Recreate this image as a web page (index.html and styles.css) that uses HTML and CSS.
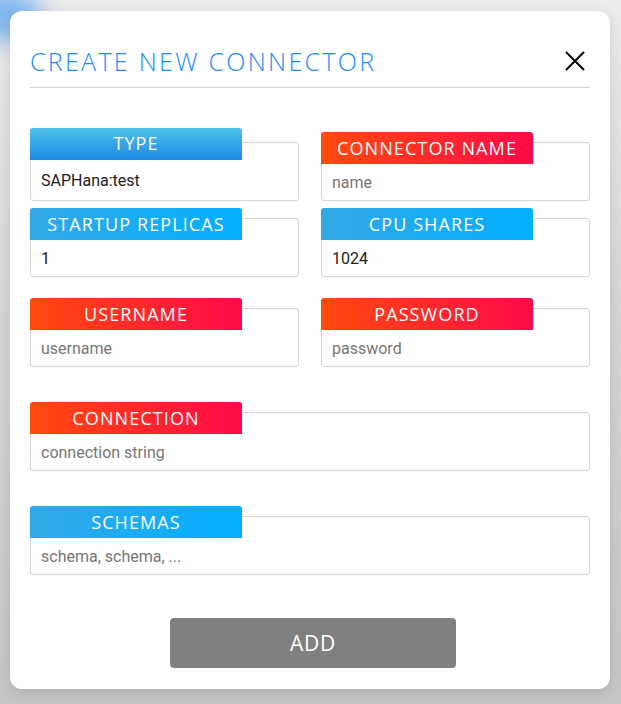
FILE: index.html
```html
<!DOCTYPE html>
<html>
<head>
<meta charset="utf-8">
<link rel="stylesheet" href="styles.css">
</head>
<body>
<div class="backdrop-blob"></div>
<div class="modal">
  <div class="modal-header">
    <h1 class="modal-title">CREATE NEW CONNECTOR</h1>
    <svg class="close-icon" width="20" height="20" viewBox="0 0 20 20"><path d="M1 1 L19 19 M19 1 L1 19" stroke="#000" stroke-width="2" fill="none"/></svg>
  </div>
  <div class="form">
    <div class="row row-1">
      <div class="field field-select">
        <div class="badge badge-select">TYPE</div>
        <div class="box"><span class="value">SAPHana:test</span></div>
      </div>
      <div class="field">
        <div class="badge badge-red">CONNECTOR NAME</div>
        <div class="box"><span class="placeholder">name</span></div>
      </div>
    </div>
    <div class="row row-2">
      <div class="field">
        <div class="badge badge-blue">STARTUP REPLICAS</div>
        <div class="box"><span class="value">1</span></div>
      </div>
      <div class="field">
        <div class="badge badge-blue">CPU SHARES</div>
        <div class="box"><span class="value">1024</span></div>
      </div>
    </div>
    <div class="row row-3">
      <div class="field">
        <div class="badge badge-red">USERNAME</div>
        <div class="box"><span class="placeholder">username</span></div>
      </div>
      <div class="field">
        <div class="badge badge-red">PASSWORD</div>
        <div class="box"><span class="placeholder">password</span></div>
      </div>
    </div>
    <div class="row row-wide row-4">
      <div class="field">
        <div class="badge badge-red">CONNECTION</div>
        <div class="box"><span class="placeholder">connection string</span></div>
      </div>
    </div>
    <div class="row row-wide row-5">
      <div class="field">
        <div class="badge badge-blue">SCHEMAS</div>
        <div class="box"><span class="placeholder">schema, schema, ...</span></div>
      </div>
    </div>
  </div>
  <div class="actions">
    <button class="add-btn">ADD</button>
  </div>
</div>
</body>
</html>
```
FILE: styles.css
```css
html, body {
  margin: 0;
  padding: 0;
}
body {
  width: 621px;
  height: 704px;
  overflow: hidden;
  background: linear-gradient(180deg, #ececec 0%, #d6d6d6 45%, #c6c6c6 100%);
  font-family: "Open Sans", "Liberation Sans", sans-serif;
  padding: 11px 11px 0 10px;
  box-sizing: border-box;
  position: relative;
}
.backdrop-blob {
  position: absolute;
  left: -30px;
  top: -10px;
  width: 70px;
  height: 50px;
  background: #7fb6ee;
  filter: blur(12px);
  border-radius: 30px;
}
.modal {
  position: relative;
  width: 600px;
  height: 678px;
  background: #fff;
  border-radius: 12px;
  box-shadow: 0 4px 14px rgba(0,0,0,0.12);
  padding: 0 20px;
  box-sizing: border-box;
  display: flex;
  flex-direction: column;
}
.modal-header {
  display: flex;
  align-items: center;
  justify-content: space-between;
  height: 77px;
  box-sizing: border-box;
  padding-top: 24px;
  border-bottom: 1px solid #d4d4d4;
  padding-right: 5px;
}
.modal-title {
  margin: 0;
  font-weight: 300;
  font-size: 25px;
  color: #1a8cff;
  letter-spacing: 2.3px;
  line-height: 30px;
}
.form {
  display: flex;
  flex-direction: column;
  padding-top: 44px;
}
.row {
  display: grid;
  grid-template-columns: 269px 269px;
  column-gap: 22px;
}
.row-wide {
  grid-template-columns: 560px;
}
.row-2 { margin-top: 7px; }
.row-3 { margin-top: 21px; }
.row-4 { margin-top: 35px; }
.row-5 { margin-top: 35px; }
.field {
  display: flex;
  flex-direction: column;
}
.badge {
  position: relative;
  z-index: 1;
  width: 212px;
  height: 32px;
  line-height: 32px;
  text-align: center;
  color: #fff;
  font-size: 18px;
  font-weight: 400;
  border-radius: 3px 3px 0 0;
  letter-spacing: 1.1px;
}
.badge-red {
  background: linear-gradient(90deg, #ff4a0c 0%, #ff0a4a 100%);
}
.badge-blue {
  background: linear-gradient(90deg, #33a8e6 0%, #02b0ff 100%);
}
.badge-select {
  background: linear-gradient(180deg, #4fc2ea 0%, #1e88e5 100%);
  margin-top: -4px;
  height: 32px;
  line-height: 30px;
}
.field-select .box {
  margin-top: -18px;
  padding-top: 18px;
  height: 59px;
}
.box {
  margin-top: -22px;
  height: 59px;
  padding-top: 22px;
  box-sizing: border-box;
  border: 1px solid #d4d4d4;
  border-radius: 3px;
  display: flex;
  align-items: center;
  padding-left: 10px;
  font-family: Roboto, "Liberation Sans", sans-serif;
  font-size: 16px;
}
.value {
  color: #212121;
}
.placeholder {
  color: #767676;
}
.actions {
  display: flex;
  justify-content: center;
  margin-top: 43px;
  padding-left: 6px;
}
.add-btn {
  width: 286px;
  height: 50px;
  border: none;
  border-radius: 4px;
  background: #808080;
  color: #fff;
  font-family: "Open Sans", "Liberation Sans", sans-serif;
  font-size: 21px;
  letter-spacing: 0.8px;
}
```
